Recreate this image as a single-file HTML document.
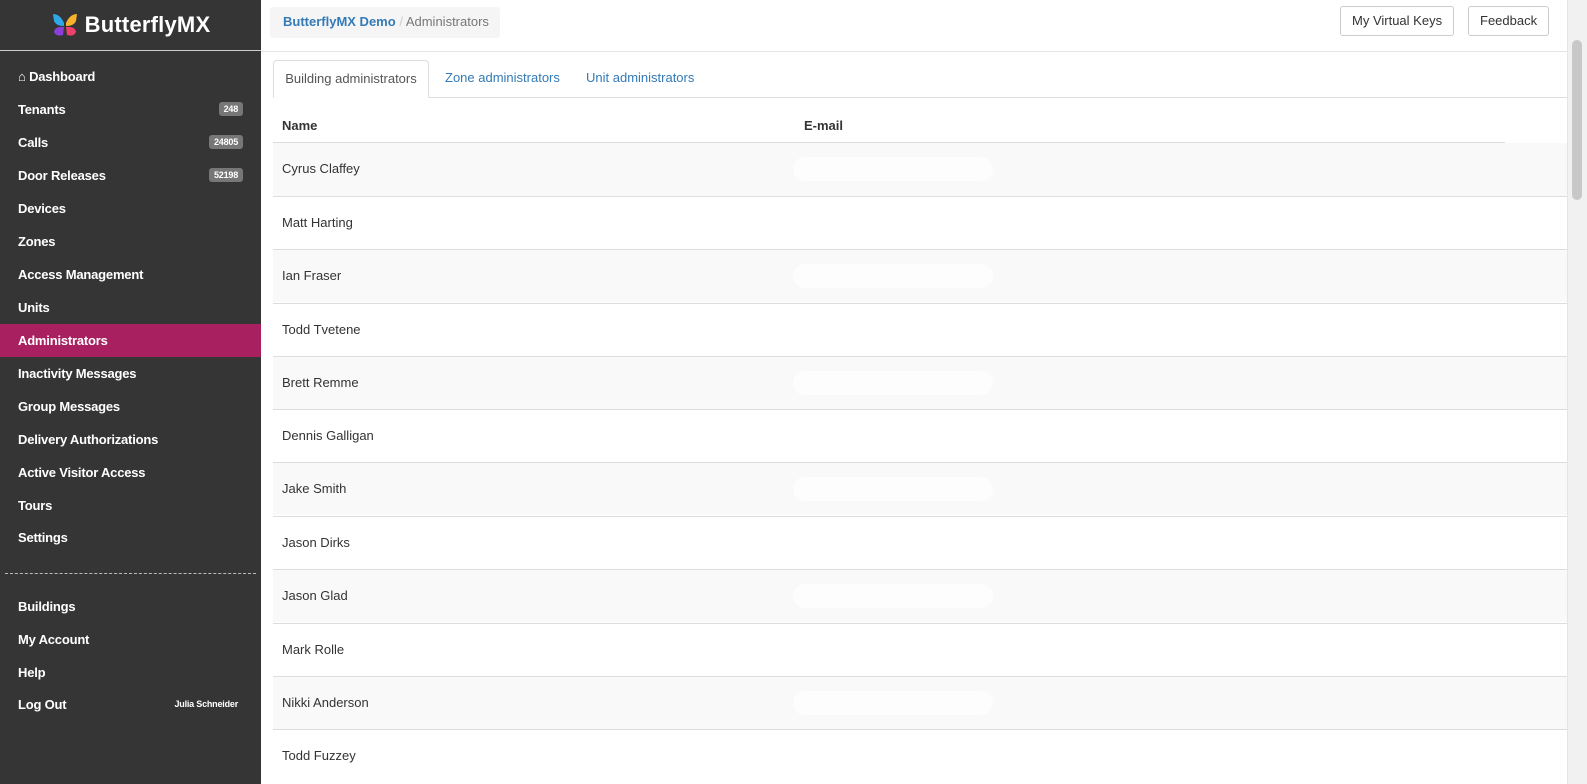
<!DOCTYPE html><html><head><style>
body{margin:0;width:1587px;height:784px;overflow:hidden;font-family:"Liberation Sans",Arial,sans-serif;font-size:13px;background:#fff;position:relative}
.sb{position:absolute;left:0;top:0;width:261px;height:784px;background:#353535;color:#fff}
.logo{height:50px;border-bottom:1px solid #ccc;display:flex;align-items:center;justify-content:center;font-size:22px;font-weight:bold;letter-spacing:.2px}
.it{position:absolute;left:0;width:261px;height:33px;line-height:33px;font-weight:bold;font-size:13px;padding-left:18px;box-sizing:border-box;letter-spacing:-.2px}
.b{position:absolute;right:18px;top:9px;background:#777;border-radius:3px;font-size:9px;line-height:14px;padding:0 5px}
.act{background:#a8205f}
.main{position:absolute;left:261px;top:0;right:0}
.bc{position:absolute;left:9px;top:7px;width:230px;height:31px;background:#f5f5f5;border-radius:3px;line-height:29px;padding-left:13px;box-sizing:border-box;color:#777}
.btn{position:absolute;top:6px;height:30px;border:1px solid #ccc;border-radius:3px;line-height:28px;padding:0 11px;box-sizing:border-box;color:#333;font-size:13px}
.hd{position:absolute;left:0;right:0;top:51px;border-top:1px solid #e5e5e5}
.tab{position:absolute;top:60px;height:38px;line-height:36px;color:#337ab7}
.tr{position:absolute;left:12px;width:1295px;height:53px;border-top:1px solid #ddd;line-height:52px;padding-left:9px;box-sizing:border-box;color:#333}
.blur{position:absolute;left:520px;top:14px;width:200px;height:24px;border-radius:12px;background:#fdfdfd}
</style></head><body>
<div class="sb">
<div class="logo"><svg width="28" height="26" viewBox="0 0 28 26" style="margin-right:6px"><path d="M2 2 Q9 2 13 11 L13 14 Q5 14 3 9Z" fill="#2fa8e8"/><path d="M26 2 Q19 2 15 11 L15 14 Q23 14 25 9Z" fill="#f7b32b"/><path d="M13 15 Q4 14 3 20 Q5 25 12 23Z" fill="#8a3fd8"/><path d="M15 15 Q24 14 25 20 Q23 25 16 23Z" fill="#ef3f6b"/></svg>ButterflyMX</div>
<div class="it" style="top:60px">&#8962; Dashboard</div>
<div class="it" style="top:93px">Tenants<span class="b">248</span></div>
<div class="it" style="top:126px">Calls<span class="b">24805</span></div>
<div class="it" style="top:159px">Door Releases<span class="b">52198</span></div>
<div class="it" style="top:192px">Devices</div>
<div class="it" style="top:225px">Zones</div>
<div class="it" style="top:258px">Access Management</div>
<div class="it" style="top:291px">Units</div>
<div class="it act" style="top:324px">Administrators</div>
<div class="it" style="top:357px">Inactivity Messages</div>
<div class="it" style="top:390px">Group Messages</div>
<div class="it" style="top:423px">Delivery Authorizations</div>
<div class="it" style="top:456px">Active Visitor Access</div>
<div class="it" style="top:489px">Tours</div>
<div class="it" style="top:521px">Settings</div>
<div style="position:absolute;left:5px;right:5px;top:573px;border-top:1px dashed #bbb"></div>
<div class="it" style="top:590px">Buildings</div>
<div class="it" style="top:623px">My Account</div>
<div class="it" style="top:656px">Help</div>
<div class="it" style="top:688px">Log Out<span style="position:absolute;right:23px;font-size:9px">Julia Schneider</span></div>
</div>
<div class="main">
<div class="bc"><b style="color:#337ab7">ButterflyMX Demo</b> <span style="color:#ccc">/</span> Administrators</div>
<div class="btn" style="left:1079px">My Virtual Keys</div>
<div class="btn" style="left:1207px">Feedback</div>
<div class="hd"></div>
<div style="position:absolute;left:12px;width:1295px;top:97px;border-top:1px solid #ddd"></div>
<div class="tab" style="left:12px;width:156px;border:1px solid #ddd;border-bottom-color:#fff;border-radius:4px 4px 0 0;background:#fff;color:#555;text-align:center;box-sizing:border-box;height:38px">Building administrators</div>
<div class="tab" style="left:184px">Zone administrators</div>
<div class="tab" style="left:325px">Unit administrators</div>
<div style="position:absolute;left:21px;top:118px;font-weight:bold;color:#333">Name</div>
<div style="position:absolute;left:543px;top:118px;font-weight:bold;color:#333">E-mail</div>
<div style="position:absolute;left:12px;width:1232px;top:142px;border-top:2px solid #ddd"></div>
<div class="tr" style="top:143px;background:#f9f9f9;border-top:none">Cyrus Claffey<div class="blur"></div></div>
<div class="tr" style="top:196px">Matt Harting</div>
<div class="tr" style="top:249px;background:#f9f9f9">Ian Fraser<div class="blur"></div></div>
<div class="tr" style="top:303px">Todd Tvetene</div>
<div class="tr" style="top:356px;background:#f9f9f9">Brett Remme<div class="blur"></div></div>
<div class="tr" style="top:409px">Dennis Galligan</div>
<div class="tr" style="top:462px;background:#f9f9f9">Jake Smith<div class="blur"></div></div>
<div class="tr" style="top:516px">Jason Dirks</div>
<div class="tr" style="top:569px;background:#f9f9f9">Jason Glad<div class="blur"></div></div>
<div class="tr" style="top:623px">Mark Rolle</div>
<div class="tr" style="top:676px;background:#f9f9f9">Nikki Anderson<div class="blur"></div></div>
<div class="tr" style="top:729px">Todd Fuzzey</div>
</div>
<div style="position:absolute;right:0;top:0;width:19px;height:784px;background:#f1f1f1;border-left:1px solid #e5e5e5"><div style="position:absolute;left:4px;top:40px;width:10px;height:160px;background:#c8c8c8;border-radius:5px"></div></div>
</body></html>
